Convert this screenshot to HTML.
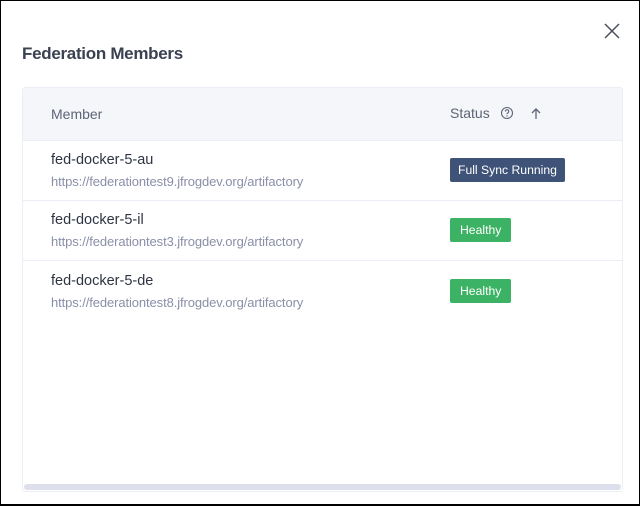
<!DOCTYPE html>
<html><head><style>
*{margin:0;padding:0;box-sizing:border-box}
body{width:640px;height:506px;background:#fff;font-family:"Liberation Sans",sans-serif;position:relative;overflow:hidden}
.frame{position:absolute;left:0;top:0;width:640px;height:506px;border:1px solid #000;border-bottom-width:2px}
.title{position:absolute;left:22px;top:44px;font-size:17px;font-weight:bold;color:#3a4150;letter-spacing:-0.3px}
.close{position:absolute;left:603px;top:22px}
.card{position:absolute;left:22px;top:87px;width:601px;height:405px;border:1px solid #eceef5;border-radius:3px;background:#fff;overflow:hidden}
.head{height:53px;background:#f5f6fa;border-bottom:1px solid #eceef5;position:relative;font-size:14px;color:#5d6475}
.row{height:60px;border-bottom:1px solid #eceef5;position:relative}
.name{position:absolute;left:28px;top:11px;font-size:14.5px;color:#2f3442}
.url{position:absolute;left:28px;top:33px;font-size:13px;color:#8a8fa8;letter-spacing:-0.1px}
.badge{position:absolute;left:427px;height:24px;line-height:24px;padding:0 8px;font-size:12.2px;color:#fff;border-radius:2px}
.blue{background:#3f5277;top:17px}
.green{background:#3cb264;top:17px;padding:0 10px}
.scroll{position:absolute;left:1px;right:1px;bottom:1px;height:6px;background:#dde0ec;border-radius:3px}
</style></head><body>
<div class="frame"></div>
<div class="title">Federation Members</div>
<svg class="close" width="18" height="18" viewBox="0 0 18 18"><path d="M2 2L16 16M16 2L2 16" stroke="#4a4f5c" stroke-width="1.5"/></svg>
<div class="card">
 <div class="head">
  <span style="position:absolute;left:28px;top:18px">Member</span>
  <span style="position:absolute;left:427px;top:17px">Status</span>
  <svg style="position:absolute;left:477px;top:18px" width="14" height="14" viewBox="0 0 14 14"><circle cx="7" cy="7" r="5.5" fill="none" stroke="#5d6475" stroke-width="1.1"/><path d="M5.3 5.5a1.7 1.7 0 1 1 2.4 1.5c-.5.3-.7.6-.7 1.1" fill="none" stroke="#5d6475" stroke-width="1.1"/><circle cx="7" cy="10" r=".7" fill="#5d6475"/></svg>
  <svg style="position:absolute;left:507px;top:19px" width="12" height="14" viewBox="0 0 12 14"><path d="M6 12V2M2 6l4-4 4 4" fill="none" stroke="#5d6475" stroke-width="1.3"/></svg>
 </div>
 <div class="row"><div class="name">fed-docker-5-au</div><div class="url">https://federationtest9.jfrogdev.org/artifactory</div><div class="badge blue">Full Sync Running</div></div>
 <div class="row"><div class="name">fed-docker-5-il</div><div class="url">https://federationtest3.jfrogdev.org/artifactory</div><div class="badge green">Healthy</div></div>
 <div class="row" style="border-bottom:none;top:1px"><div class="name">fed-docker-5-de</div><div class="url">https://federationtest8.jfrogdev.org/artifactory</div><div class="badge green">Healthy</div></div>
 <div class="scroll"></div>
</div>
</body></html>
